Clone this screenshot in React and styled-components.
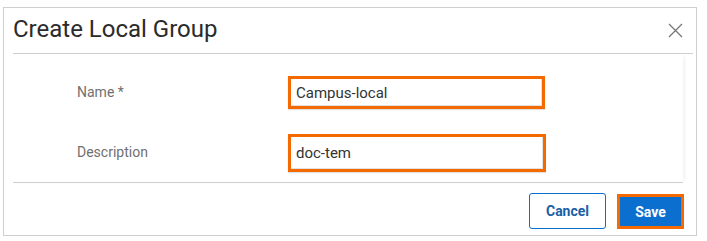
import React from 'react';
import styled, {createGlobalStyle} from 'styled-components';

const GlobalStyle = createGlobalStyle`
    html, body {
        margin: 0;
        background: #fff;
    }
    body {
        padding: 7px 0 0 3px;
        font-family: Roboto, "Liberation Sans", sans-serif;
    }
`;

const Dialog = styled.div`
    box-sizing: border-box;
    width: 694px;
    height: 229px;
    border: 1px solid #cfcfcf;
    display: flex;
    flex-direction: column;
    background: #fff;
`;

const Header = styled.header`
    height: 45px;
    margin: 0 3px 0 9px;
    border-bottom: 1px solid #cfcfcf;
    display: flex;
    align-items: center;
    justify-content: space-between;
`;

const Title = styled.h1`
    margin: 0;
    padding-bottom: 4px;
    font-size: 24px;
    font-weight: 400;
    color: #2b2b2b;
`;

const CloseButton = styled.button`
    border: none;
    background: none;
    padding: 0;
    margin-right: 10px;
    width: 15px;
    height: 15px;
    display: flex;
    cursor: pointer;
`;

const Body = styled.div`
    margin: 0 13px 0 9px;
    padding: 22px 0 10px;
    border-bottom: 1px solid #cfcfcf;
    box-shadow: 3px 0 4px -2px rgba(0, 0, 0, 0.08);
    display: flex;
    flex-direction: column;
    gap: 25px;
`;

const Row = styled.div`
    display: grid;
    grid-template-columns: 211px 1fr;
    align-items: center;
    padding-left: 64px;
`;

const Label = styled.label`
    font-size: 14px;
    color: #707070;
    margin-top: ${props => props.$offset || 0}px;
`;

const Input = styled.input`
    box-sizing: border-box;
    width: ${props => props.$width}px;
    height: ${props => props.$height}px;
    border: 3px solid #f56a00;
    padding: 0 0 0 5px;
    font-family: inherit;
    font-size: 15px;
    color: #333;
    outline: none;
    box-shadow: inset -1px -1px 0 #e2e2e2, 0 1px 1px rgba(0, 0, 0, 0.12);
`;

const Footer = styled.footer`
    flex: 1;
    display: flex;
    justify-content: flex-end;
    align-items: flex-start;
    gap: 11px;
    padding: 10px 12px 0 0;
`;

const Button = styled.button`
    box-sizing: border-box;
    height: 36px;
    font-family: inherit;
    font-size: 14px;
    font-weight: 700;
    border-radius: 3px;
    cursor: pointer;
`;

const CancelButton = styled(Button)`
    width: 77px;
    background: #fff;
    color: #1a5ea8;
    border: 1px solid #0b6fcc;
`;

const SaveButton = styled(Button)`
    width: 67px;
    margin-top: 1px;
    height: 35px;
    background: #0b6fcf;
    color: #fff;
    border: 3px solid #f56a00;
    border-radius: 0;
`;

const CloseIcon = () => (
    <svg width="15" height="15" viewBox="0 0 15 15">
        <path d="M1 1 L14 14 M14 1 L1 14" stroke="#777" strokeWidth="1.3" fill="none" />
    </svg>
);

const App = () => (
    <>
        <GlobalStyle />
        <Dialog>
            <Header>
                <Title>Create Local Group</Title>
                <CloseButton aria-label="Close">
                    <CloseIcon />
                </CloseButton>
            </Header>
            <Body>
                <Row>
                    <Label $offset={-2}>Name *</Label>
                    <Input $width={257} $height={33} defaultValue="Campus-local" />
                </Row>
                <Row>
                    <Label $offset={-2}>Description</Label>
                    <Input $width={258} $height={38} defaultValue="doc-tem" />
                </Row>
            </Body>
            <Footer>
                <CancelButton>Cancel</CancelButton>
                <SaveButton>Save</SaveButton>
            </Footer>
        </Dialog>
    </>
);

export default App;
